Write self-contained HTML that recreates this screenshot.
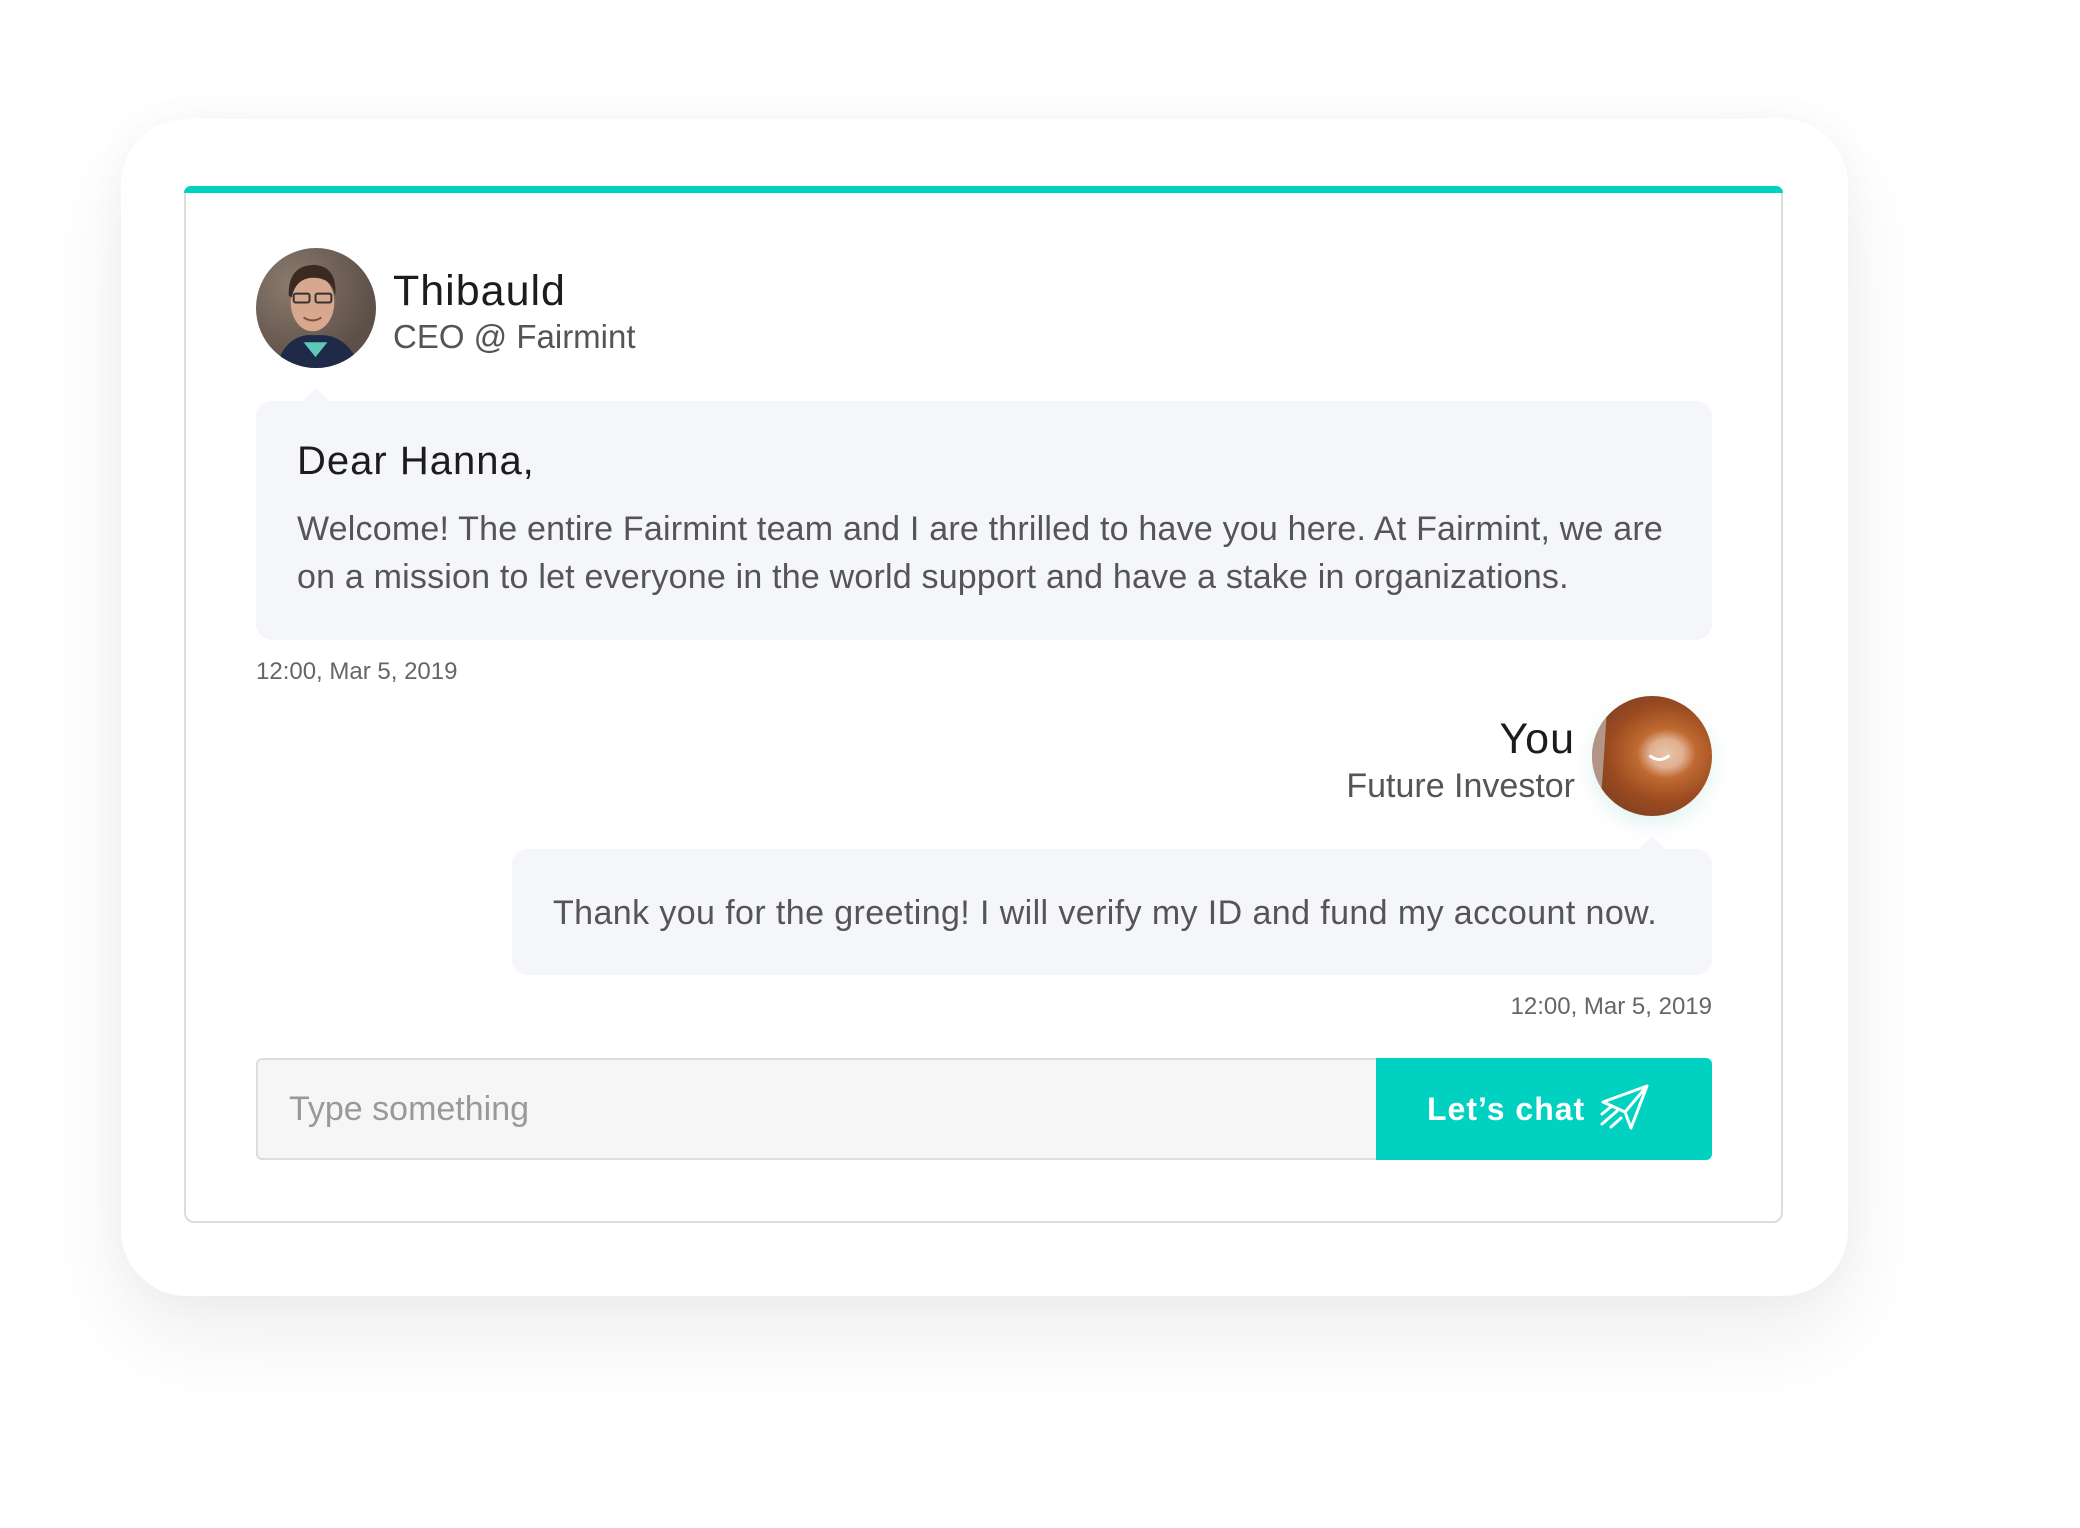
<!DOCTYPE html>
<html><head><meta charset="utf-8"><style>
*{margin:0;padding:0;box-sizing:border-box}
body{width:2080px;height:1528px;background:#fff;position:relative;overflow:hidden;font-family:"Liberation Sans",sans-serif}
.outer{position:absolute;left:121px;top:119px;width:1727px;height:1177px;background:#fff;border-radius:66px;box-shadow:0 40px 90px rgba(0,0,0,0.07),0 0 40px rgba(0,0,0,0.03)}
.inner{position:absolute;left:184px;top:186px;width:1599px;height:1037px;border:2px solid #dcdcdc;border-top:none;border-radius:10px;background:#fff}
.teal{position:absolute;left:184px;top:186px;width:1599px;height:7px;background:#00d1c1;border-radius:8px 8px 0 0}
.av{position:absolute;width:120px;height:120px;border-radius:50%;overflow:hidden}
.t{position:absolute;white-space:nowrap}
.bub{position:absolute;background:#f5f6fa;border-radius:16px}
.arrow{position:absolute;width:0;height:0;border-left:14px solid transparent;border-right:14px solid transparent;border-bottom:14px solid #f5f6fa}
</style></head><body>
<div class="outer"></div>
<div class="inner"></div>
<div class="teal"></div>

<div class="av" style="left:256px;top:248px;background:radial-gradient(circle at 30% 30%,#8a7a6e,#5d5048 70%)">
<svg width="120" height="120" viewBox="0 0 121 121">
<path d="M20 121 Q30 85 60 88 Q92 85 105 121Z" fill="#1e2a48"/>
<path d="M48 95 L60 110 L72 95Z" fill="#5fc9b8"/>
<ellipse cx="57" cy="55" rx="22" ry="29" fill="#d8a88e"/>
<path d="M33 48 Q32 18 58 17 Q82 18 80 48 Q76 30 58 30 Q40 30 36 50Z" fill="#3a2a22"/>
<rect x="38" y="46" width="16" height="9" rx="2" fill="none" stroke="#333" stroke-width="2"/>
<rect x="60" y="46" width="16" height="9" rx="2" fill="none" stroke="#333" stroke-width="2"/>
<path d="M48 70 Q57 76 66 70" stroke="#8a4a3a" stroke-width="2" fill="none"/>
</svg></div>
<div class="t" style="left:393px;top:267px;font-size:43px;color:#1c1c1c;letter-spacing:1px">Thibauld</div>
<div class="t" style="left:393px;top:318px;font-size:33px;color:#555">CEO @ Fairmint</div>

<div class="arrow" style="left:302px;top:388px"></div>
<div class="bub" style="left:256px;top:401px;width:1456px;height:239px"></div>
<div class="t" style="left:297px;top:439px;font-size:40px;color:#1c1c1c;letter-spacing:1px">Dear Hanna,</div>
<div class="t" style="left:297px;top:505px;font-size:34px;line-height:48px;color:#555;letter-spacing:0.2px">Welcome! The entire Fairmint team and I are thrilled to have you here. At Fairmint, we are<br>on a mission to let everyone in the world support and have a stake in organizations.</div>
<div class="t" style="left:256px;top:658px;font-size:24px;color:#666">12:00, Mar 5, 2019</div>

<div class="t" style="right:505px;top:715px;font-size:43px;color:#1c1c1c;letter-spacing:1px">You</div>
<div class="t" style="right:505px;top:767px;font-size:34px;color:#555">Future Investor</div>
<div class="av" style="left:1592px;top:696px;background:radial-gradient(ellipse at 62% 48%,#e9c4aa 0,#e0b090 16%,#c06a32 28%,#9a4a20 55%,#6a3a28 100%);box-shadow:0 8px 20px rgba(0,160,140,0.12)">
<svg width="120" height="120" viewBox="0 0 121 121"><path d="M0 0 L16 0 L8 121 L0 121Z" fill="#ccc" opacity=".6"/><path d="M58 60 Q68 68 78 60" stroke="#fff" stroke-width="3" fill="none"/></svg></div>

<div class="arrow" style="left:1638px;top:836px"></div>
<div class="bub" style="left:512px;top:849px;width:1200px;height:126px"></div>
<div class="t" style="left:553px;top:894px;font-size:34px;color:#555;letter-spacing:0.4px">Thank you for the greeting! I will verify my ID and fund my account now.</div>
<div class="t" style="right:368px;top:993px;font-size:24px;color:#666">12:00, Mar 5, 2019</div>

<div style="position:absolute;left:256px;top:1058px;width:1122px;height:102px;background:#f6f6f6;border:2px solid #ddd;border-right:none;border-radius:6px 0 0 6px"></div>
<div class="t" style="left:289px;top:1090px;font-size:34px;color:#999">Type something</div>
<div style="position:absolute;left:1376px;top:1058px;width:336px;height:102px;background:#00d1c1;border-radius:0 6px 6px 0"></div>
<div class="t" style="left:1427px;top:1091px;font-size:32px;color:#fff;font-weight:bold;letter-spacing:1px">Let’s chat</div>
<svg style="position:absolute;left:1599px;top:1084px" width="52" height="50" viewBox="0 0 52 50">
<path d="M4 18 L48 2 L32 44 L26 28 Z M26 28 L48 2" fill="none" stroke="#fff" stroke-width="3" stroke-linejoin="round"/>
<path d="M3 40 L18 27 M12 43 L22 34 M3 30 L13 22" stroke="#fff" stroke-width="3" stroke-linecap="round"/>
</svg>
</body></html>
